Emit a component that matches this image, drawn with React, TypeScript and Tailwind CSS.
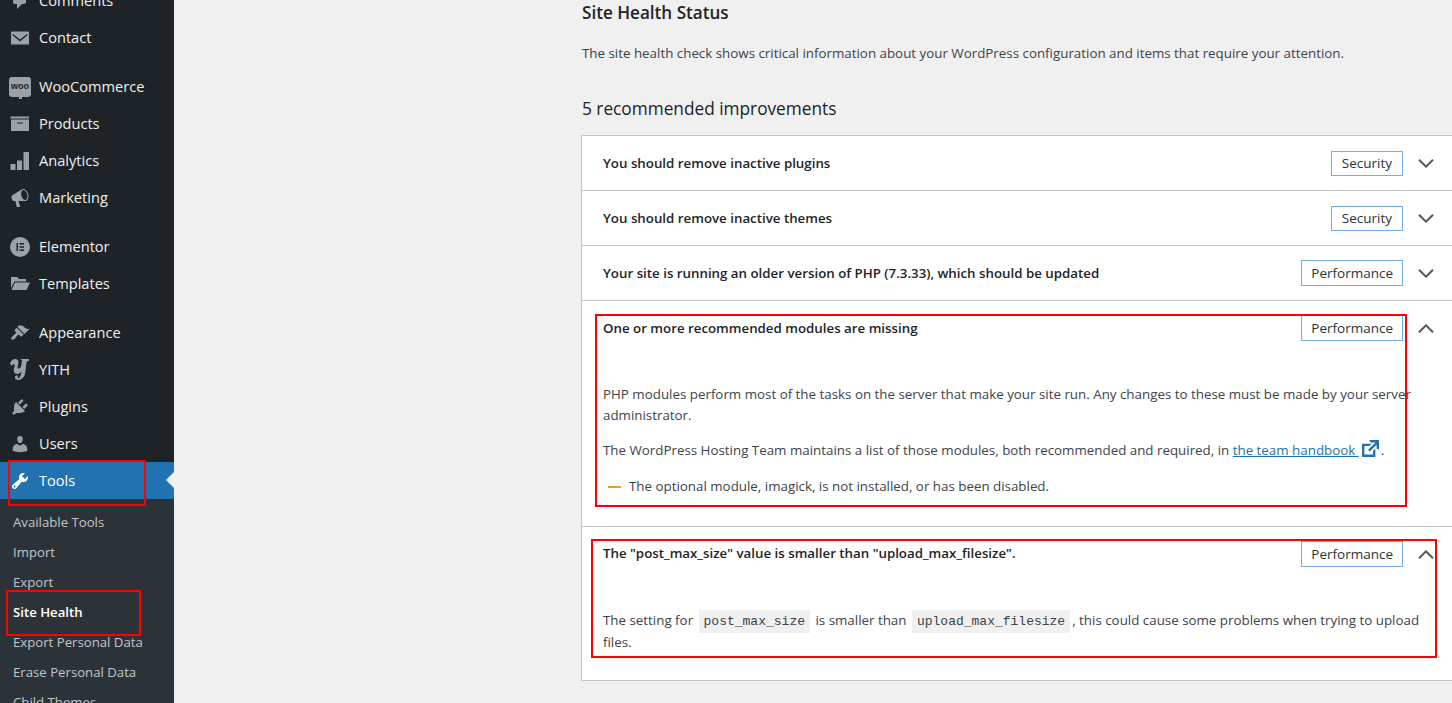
import type { ReactNode } from "react";

const font = "font-['Open_Sans','Noto_Sans',sans-serif]";

function Dash({ d, className = "fill-[#9ba2a7]" }: { d: string; className?: string }) {
  return (
    <svg viewBox="0 0 20 20" className={`w-5 h-5 ${className}`}>
      <path fillRule="evenodd" d={d} />
    </svg>
  );
}

function Comments() {
  return <Dash d="M5 2h9c1.100 0 2 .9 2 2v7c0 1.100-.9 2-2 2h-2l-5 5v-5H5c-1.100 0-2-.9-2-2V4c0-1.100.9-2 2-2z" />;
}
function Contact() {
  return <Dash d="M1.500 3.500h17c.3 0 .5.2.5.5v12.500H1V4c0-.3.2-.5.5-.5zM3 6l7 5.500L17 6l.8 1L10 13.400 2.200 7z" />;
}
function Woo() {
  return (
    <div className="relative w-[22px] h-[20px] rounded-[3px] bg-[#9ba2a7] flex items-center justify-center">
      <span className="font-['Liberation_Sans',sans-serif] font-bold text-[9px] leading-none text-[#1d2327]">woo</span>
      <span className="absolute left-[10px] -bottom-[2px] w-[3px] h-[3px] bg-[#9ba2a7]" />
    </div>
  );
}
function Products() {
  return <Dash d="M19 2.500v2H.5v-2zM1 5.500h18V17H1zM13 9.500V8.500H7v1z" />;
}
function Analytics() {
  return <Dash d="M.5 13h5v6h-5zM7 9.500h5V19H7zM13.500 1h5.500v18h-5.500z" />;
}
function Marketing() {
  return (
    <Dash d="M18.150 5.940c.46 1.620.38 3.220-.02 4.480-.42 1.280-1.260 2.180-2.300 2.480-.16.060-.26.060-.40.060-.06.020-.12.020-.18.020-.06.020-.14.020-.22.020H8.500l1.700 5.500c.02.140-.06.260-.14.340-.08.100-.24.160-.34.160H6.950c-.1 0-.26-.06-.34-.16-.08-.08-.16-.2-.14-.34l-1-5.500H4.250c-.5.060-1.080-.18-1.540-.62s-.88-1.080-1.060-1.880c-.24-.8-.2-1.560-.02-2.200.18-.62.580-1.080 1.060-1.300l9-5.400c.1-.06.18-.1.24-.16.060-.04.140-.08.240-.12.160-.08.280-.12.500-.18 1.040-.3 2.240.1 3.220 1 .98.880 1.780 2.240 2.260 3.860zm-2.580 5.980c.4-.1.740-.34 1.040-.7.580-.7.860-1.760.860-3.040-.02-.64-.1-1.300-.28-1.980-.34-1.360-1.020-2.500-1.780-3.240s-1.680-1.100-2.460-.88c-.38.120-.72.380-.98.760-.58.7-.86 1.760-.86 3.040 0 .640.100 1.300.280 1.980.34 1.360 1.020 2.500 1.780 3.240.78.740 1.680 1.100 2.420.82z" />
  );
}
function Elementor() {
  return <Dash d="M10 0a10 10 0 1 0 0 20 10 10 0 0 0 0-20zM6.500 6h1.500v8H6.500zM9.500 6H14v1.500H9.500zM9.500 9.250H14v1.500H9.500zM9.500 12.500H14V14H9.500z" />;
}
function Templates() {
  return <Dash d="M1 3h6l2 2h7v2.500H4.500L1 14zM5 8.500h15l-3.500 7.500H1.500z" />;
}
function Appearance() {
  return (
    <Dash d="M14.480 11.060L7.410 3.990l1.500-1.500c.5-.56 2.300-.47 3.510.32 1.210.8 1.430 1.280 2.910 2.100 1.180.64 2.450 1.260 4.450.85zm-.71.71L6.700 4.700 4.930 6.470c-.39.39-.39 1.020 0 1.410l1.060 1.060c.39.39.39 1.030 0 1.420-.6.6-1.430 1.110-2.210 1.690-.35.26-.7.53-1.010.84-1.430 1.430-1.790 2.960-1.160 3.590s2.160.27 3.590-1.160c.31-.31.58-.66.84-1.010.58-.78 1.090-1.610 1.690-2.210.39-.39 1.030-.39 1.420 0l1.060 1.060c.39.39 1.020.39 1.410 0z" />
  );
}
function Yith() {
  return (
    <svg viewBox="0 0 20 23" className="w-5 h-[23px] fill-[#9ba2a7]">
      <path d="M0 5.500C1.200 2 3.500.8 5.600 1c2.200.2 3.200 1.900 2.800 4.200-.3 1.800-1 3.400-.8 4.600.2 1 1.300 1 2.200.2.700-.6 1.300-1.500 1.500-2.500l.7-5.500h-1V1h8v1.800c-1.300.2-2.300.4-2.500 1.700l-1.200 10c-.5 4.200-3.500 7.500-7 7.500-2.200 0-3.600-1.300-3.300-3 .2-1.400 1.600-1.900 2.500-1.200.7.5.6 1.600 0 2.300 1.700.4 3-1.500 3.500-4l.4-2.700c-1 1.500-2.600 2.500-4.400 2.500-2.300 0-3.600-1.400-3.300-3.800.2-1.800 1-3.500 1-4.800 0-1.300-1.100-1.500-1.900-.7-.3.300-.6.800-.9 1.400z" />
    </svg>
  );
}
function Plugins() {
  return (
    <Dash d="M13.110 4.360L9.870 7.600 8 5.730l3.240-3.240c.35-.34 1.050-.2 1.560.32.52.51.66 1.210.31 1.550zm-8 1.770l.91-1.120 9.010 9.010-1.190.84c-.71.71-2.630 1.160-3.820 1.160H6.140L4.900 17.260c-.59.59-1.540.59-2.120 0-.59-.58-.59-1.530 0-2.120l1.240-1.240v-3.880c0-1.130.4-3.190 1.090-3.890zm7.260 3.970l3.240-3.240c.34-.35 1.040-.21 1.550.31.52.51.66 1.210.31 1.550l-3.240 3.250z" />
  );
}
function Users() {
  return (
    <Dash d="M10 9.250c-2.270 0-2.730-3.440-2.730-3.440C7 4.020 7.820 2 9.970 2c2.160 0 2.980 2.020 2.710 3.810 0 0-.41 3.440-2.680 3.440zm0 2.570L12.720 10c2.390 0 4.520 2.330 4.520 4.530v2.490s-3.650 1.130-7.240 1.130c-3.650 0-7.240-1.130-7.240-1.130v-2.490c0-2.250 1.940-4.480 4.470-4.480z" />
  );
}

function MenuItem({ icon, label }: { icon: ReactNode; label: string }) {
  return (
    <div className="flex h-[37px] items-center">
      <div className="w-[39px] flex justify-center pl-[1px] shrink-0">{icon}</div>
      <span className="text-[14.600px] text-[#f0f0f1]">{label}</span>
    </div>
  );
}

function Sidebar() {
  const sub = ["Available Tools", "Import", "Export", "Site Health", "Export Personal Data", "Erase Personal Data", "Child Themes"];
  return (
    <aside className="w-[174px] shrink-0 bg-[#1d2327] -mt-[18px]">
      <MenuItem icon={<Comments />} label="Comments" />
      <MenuItem icon={<Contact />} label="Contact" />
      <div className="h-3" />
      <MenuItem icon={<Woo />} label="WooCommerce" />
      <MenuItem icon={<Products />} label="Products" />
      <MenuItem icon={<Analytics />} label="Analytics" />
      <MenuItem icon={<Marketing />} label="Marketing" />
      <div className="h-3" />
      <MenuItem icon={<Elementor />} label="Elementor" />
      <MenuItem icon={<Templates />} label="Templates" />
      <div className="h-3" />
      <MenuItem icon={<Appearance />} label="Appearance" />
      <MenuItem icon={<Yith />} label="YITH" />
      <MenuItem icon={<Plugins />} label="Plugins" />
      <MenuItem icon={<Users />} label="Users" />
      <div className="relative flex h-[37px] items-center bg-[#2271b1]">
        <div className="w-[39px] flex justify-center pl-[1px] shrink-0">
          <Dash className="fill-white" d="M16.680 9.770c-1.340 1.340-3.300 1.670-4.950.99l-5.410 6.520c-.99.99-2.590.99-3.580 0s-.99-2.590 0-3.570l6.520-5.420c-.68-1.650-.35-3.610.99-4.950 1.280-1.280 3.120-1.620 4.720-1.060l-2.890 2.890 2.820 2.820 2.860-2.870c.53 1.580.18 3.390-1.080 4.670zM3.810 16.210c.4.39 1.040.39 1.430 0 .4-.4.4-1.040 0-1.430-.39-.4-1.030-.4-1.430 0-.39.39-.39 1.030 0 1.430z" />
        </div>
        <span className="text-[14.600px] text-white">Tools</span>
        <span className="absolute right-0 top-[10px] border-y-[8px] border-r-[8px] border-y-transparent border-r-[#f0f0f1]" />
      </div>
      <div className="bg-[#2c3338] pt-[9px] pb-2">
        {sub.map((s) => (
          <div key={s} className={`h-[30px] flex items-center pl-[13px] text-[13.200px] ${s === "Site Health" ? "font-semibold text-white" : "text-[#c3c4c7]"}`}>
            {s}
          </div>
        ))}
      </div>
    </aside>
  );
}

function Chevron({ up }: { up?: boolean }) {
  return (
    <svg viewBox="0 0 16 9" className="w-4 h-[9px] fill-none stroke-[#50575e] stroke-2 shrink-0">
      <path d={up ? "M1 8.300L8 1.400l7 6.900" : "M1 .7l7 6.900L15 .7"} />
    </svg>
  );
}

function Row({ title, badge, open, last, children }: { title: string; badge: string; open?: boolean; last?: boolean; children?: ReactNode }) {
  return (
    <div className="border-b border-[#c3c4c7]">
      <div className="flex h-[54px] items-center pl-[21px] pr-[18px]">
        <span className={`flex-1 text-[13.300px] font-semibold text-[#1d2327] ${last ? "" : "pt-[2px]"}`}>{title}</span>
        <span className={`border border-[#72aee6] flex items-center text-[13.500px] text-[#2c3338] ${badge === "Security" ? "h-[25px] px-[10px]" : "h-[26px] px-[9px]"}`}>{badge}</span>
        <span className="ml-[15px]"><Chevron up={open} /></span>
      </div>
      {children}
    </div>
  );
}

function Code({ children }: { children: ReactNode }) {
  return (
    <code className="mx-[2px] bg-[#f0f0f1] px-[5px] py-[4px] font-['Liberation_Mono',monospace] text-[13px] leading-none">{children}</code>
  );
}

function Main() {
  return (
    <main className="flex-1 min-w-0 pl-[407px] text-[#3c434a]">
      <h2 className="ml-[1px] text-[17.100px] font-semibold leading-6 text-[#1d2327] mt-[1px]">Site Health Status</h2>
      <p className="ml-[1px] mt-[18px] text-[13.350px] leading-[21px]">
        The site health check shows critical information about your WordPress configuration and items that require your attention.
      </p>
      <h3 className="ml-[1px] mt-[33px] text-[17.250px] leading-[24px] text-[#1d2327]">5 recommended improvements</h3>
      <div className="mt-[14px] bg-white border-l border-t border-[#c3c4c7]">
        <Row title="You should remove inactive plugins" badge="Security" />
        <Row title="You should remove inactive themes" badge="Security" />
        <Row title="Your site is running an older version of PHP (7.3.33), which should be updated" badge="Performance" />
        <Row title="One or more recommended modules are missing" badge="Performance" open>
          <div className="pl-[21px] pr-[28px] pt-[29px] pb-[29px] text-[13.350px] leading-[21px]">
            <p>PHP modules perform most of the tasks on the server that make your site run. Any changes to these must be made by your server administrator.</p>
            <p className="mt-[14px]">
              The WordPress Hosting Team maintains a list of those modules, both recommended and required, in{" "}
              <a className="text-[#2271b1] underline">the team handbook&nbsp;</a>
              <svg viewBox="3 3 14 14" className="inline-block align-[-2px] w-[17px] h-[17px] fill-[#2271b1] ml-[3px]"><path d="M9 3h8v8l-2-1V6.920l-5.600 5.590-1.410-1.410L14.080 5H10zm3 12v-3l2-2v7H3V6h8L9 8H5v7h7z" /></svg>
              <span className="ml-[2px]">.</span>
            </p>
            <p className="mt-[15px] flex items-center">
              <span className="ml-[5px] mr-[8px] w-[13px] h-[2px] bg-[#dba617]" />
              The optional module, imagick, is not installed, or has been disabled.
            </p>
          </div>
        </Row>
        <Row title={'The "post_max_size" value is smaller than "upload_max_filesize".'} badge="Performance" open last>
          <div className="pl-[21px] pr-[28px] pt-[28px] pb-[27px] text-[13.350px] leading-[22px]">
            <p>
              The setting for <Code>post_max_size</Code> is smaller than <Code>upload_max_filesize</Code>, this could cause some problems when trying to upload files.
            </p>
          </div>
        </Row>
      </div>
    </main>
  );
}

function Mark({ className }: { className: string }) {
  return <div className={`absolute border-2 border-[#ff0000] pointer-events-none ${className}`} />;
}

export default function App() {
  return (
    <div className={`relative flex h-[703px] w-full overflow-hidden bg-[#f0f0f1] ${font}`}>
      <Sidebar />
      <Main />
      <Mark className="left-[8px] top-[460px] w-[138px] h-[46px]" />
      <Mark className="left-[6px] top-[590px] w-[135px] h-[46px]" />
      <Mark className="left-[595px] top-[314px] w-[812px] h-[193px]" />
      <Mark className="left-[591px] top-[539px] w-[846px] h-[119px]" />
    </div>
  );
}
